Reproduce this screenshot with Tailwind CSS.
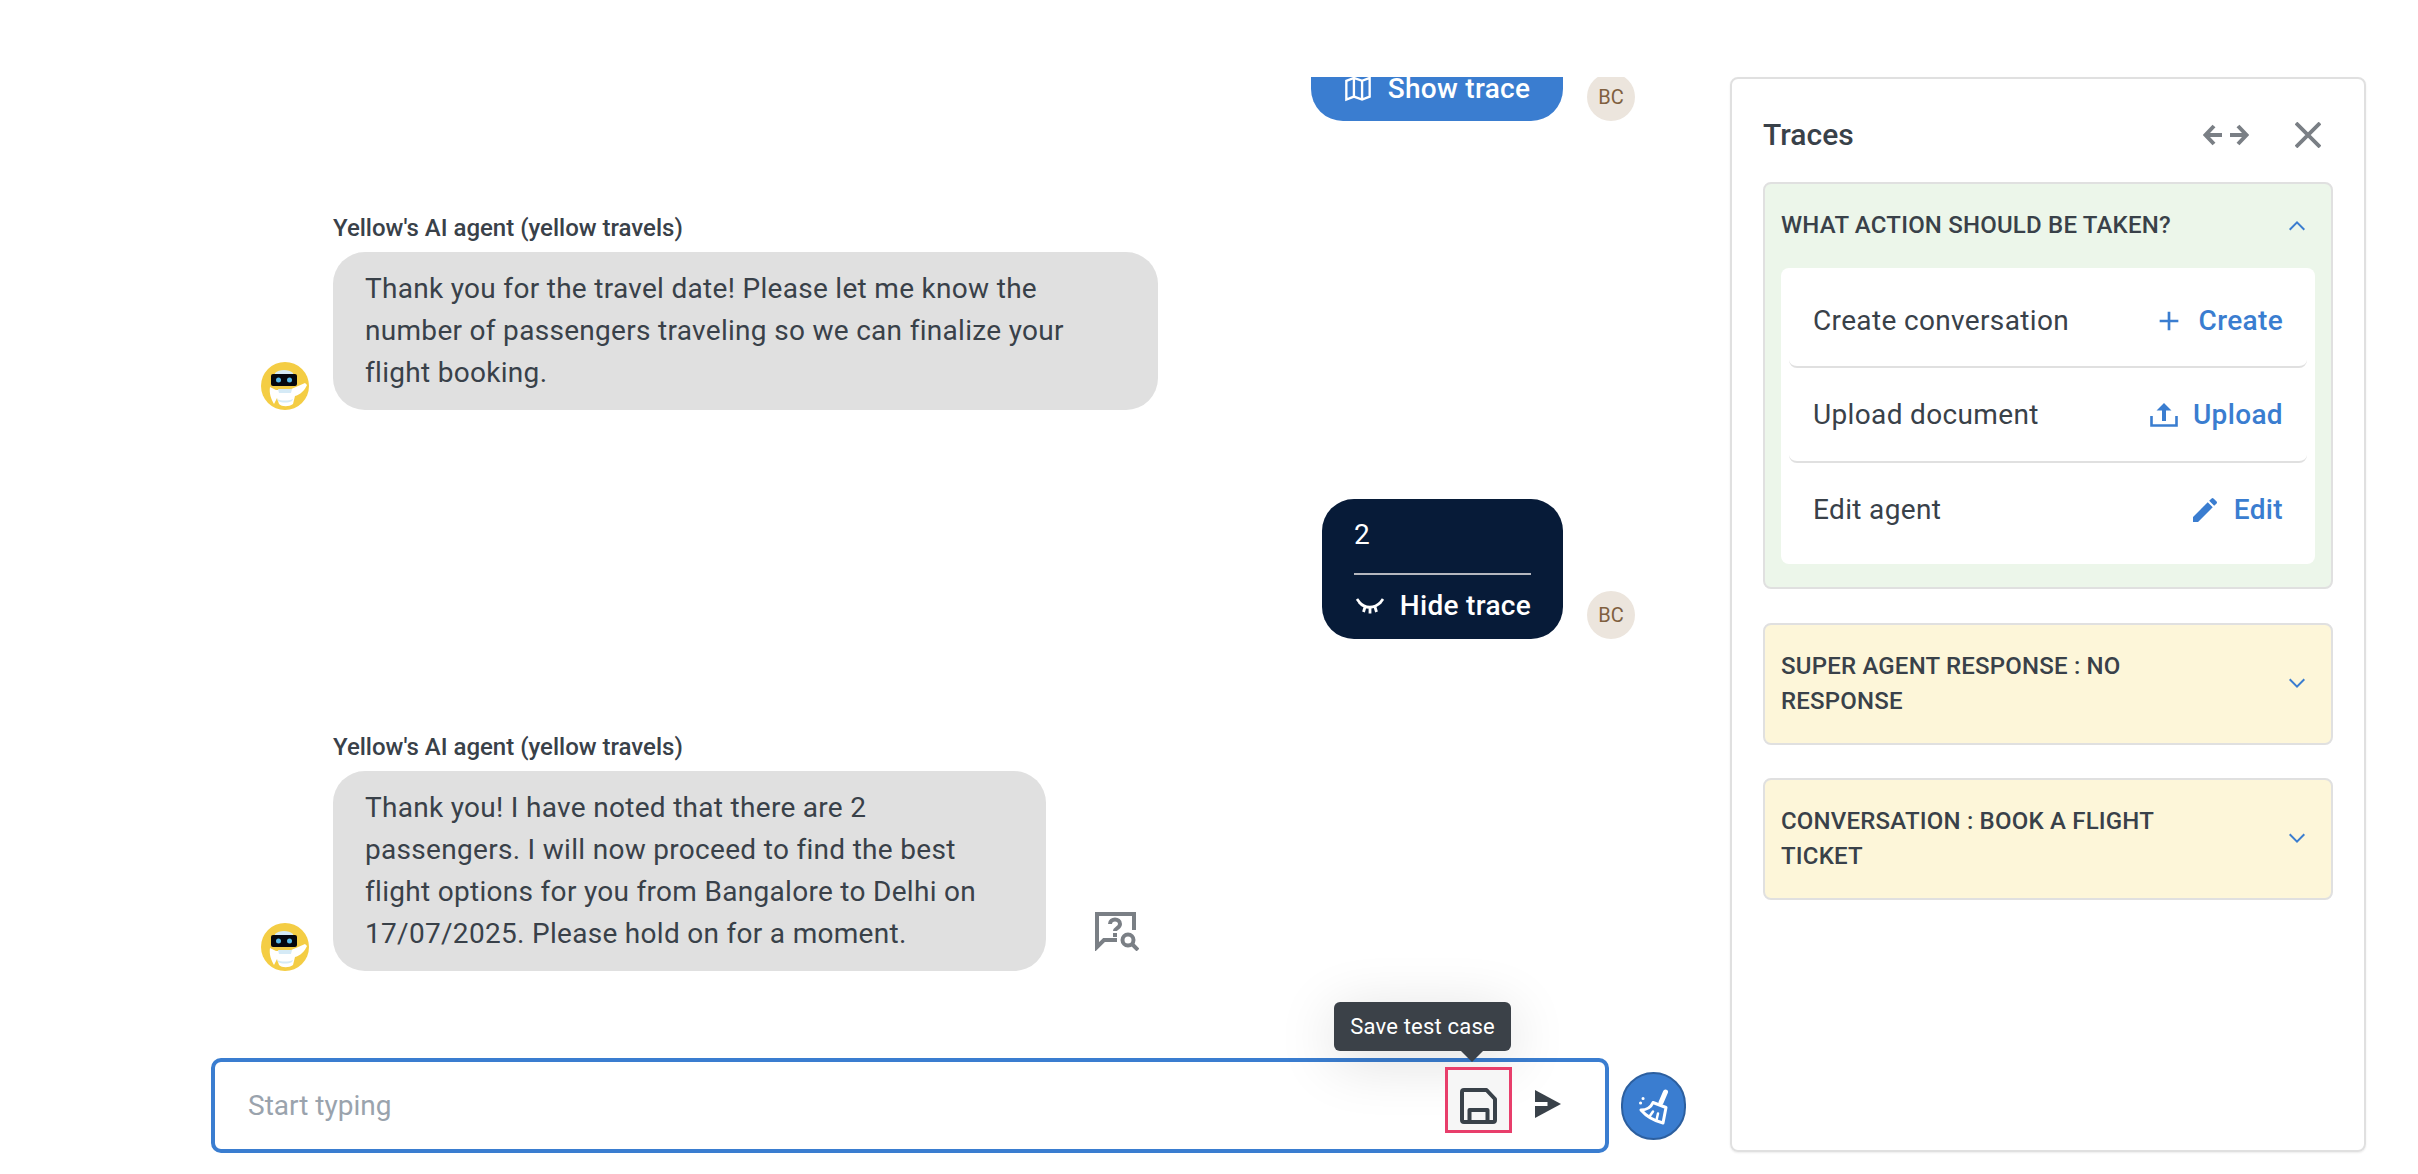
<!doctype html>
<html>
<head>
<meta charset="utf-8">
<script src="https://cdn.jsdelivr.net/npm/@tailwindcss/browser@4"></script>
</head>
<body class="bg-white">
<div class="flex h-[1174px] w-[2418px] overflow-hidden bg-white pt-[77px] pb-[21px] font-['Roboto',sans-serif] text-[#394149]">
  <main class="flex w-[1730px] flex-col">
    <section class="flex h-[981px] flex-col justify-end overflow-hidden pb-[87px] pl-[261px] pr-[95px]">
      <div class="flex shrink-0 items-end justify-end gap-6">
        <div class="flex h-[84px] w-[252px] items-end justify-center gap-4 rounded-[32px] bg-[#3a7dd0] pb-[11px] text-[28px] font-medium leading-[42px] tracking-[0.3px] text-white">
          <svg class="mb-[7px] h-[28px] w-[28px]" viewBox="0 0 24 24" fill="none" stroke="currentColor" stroke-width="2"><path d="M2 5l6.500-2.500 7 2.500L22 2.500v16L15.500 21l-7-2.500L2 21zM8.500 2.500v16M15.500 5v16"/></svg>
          <span>Show trace</span>
        </div>
        <div class="flex h-12 w-12 items-center justify-center rounded-full bg-[#ece5dd] text-[20px] text-[#80603f]">BC</div>
      </div>

      <div class="mt-[91px] flex shrink-0 items-end gap-6">
        <svg class="h-12 w-12 shrink-0" viewBox="0 0 48 48"><circle cx="24" cy="24" r="24" fill="#f4cd44"/><path d="M9 25l6 3h13l16-7 2 2c-2 5-7 10-12 11l-2 8c-4 3-11 3-14 0l-2-6-3 6c-3-5-5-11-4-17z" fill="#fff"/><path d="M17 27h14l-1 4H18zM16 37c5 2 11 2 16 0l-1 2c-4 2-10 2-14 0z" fill="#d5eaf6"/><path d="M14 11c4-4 14-4 18 0v2H14z" fill="#d5eaf6"/><rect x="10" y="12" width="26" height="12" rx="2" fill="#05070d"/><circle cx="17.500" cy="18" r="2.500" fill="#58b9e8"/><circle cx="28.500" cy="18" r="2.500" fill="#58b9e8"/></svg>
        <div>
          <div class="mb-[8px] text-[24px] font-medium leading-[32px]">Yellow's AI agent (yellow travels)</div>
          <div class="w-[825px] rounded-[32px] bg-[#e0e0e0] px-8 py-4 text-[28px] leading-[42px] tracking-[0.3px]">Thank you for the travel date! Please let me know the number of passengers traveling so we can finalize your flight booking.</div>
        </div>
      </div>

      <div class="mt-[89px] flex shrink-0 items-end justify-end gap-6">
        <div class="h-[140px] w-[241px] rounded-[32px] bg-[#071b38] px-8 pt-4 text-white">
          <div class="h-[42px] text-[28px] leading-[40px]">2</div>
          <div class="mt-[16px] h-[2px] bg-[#b4b7be]"></div>
          <div class="mt-[11px] flex items-center justify-between text-[28px] font-medium leading-[40px] tracking-[0.3px]">
            <svg class="h-[22px] w-[32px]" viewBox="0 0 32 22" fill="none" stroke="currentColor" stroke-width="2.800"><path d="M5 7c6 7 15 7 22 0M3 4l3 4M29 4l-3 4M11 12l-1.500 5M16 13.500v5M21 12l1.500 5"/></svg>
            <span>Hide trace</span>
          </div>
        </div>
        <div class="flex h-12 w-12 items-center justify-center rounded-full bg-[#ece5dd] text-[20px] text-[#80603f]">BC</div>
      </div>

      <div class="mt-[92px] flex shrink-0 items-end gap-6">
        <svg class="h-12 w-12 shrink-0" viewBox="0 0 48 48"><circle cx="24" cy="24" r="24" fill="#f4cd44"/><path d="M9 25l6 3h13l16-7 2 2c-2 5-7 10-12 11l-2 8c-4 3-11 3-14 0l-2-6-3 6c-3-5-5-11-4-17z" fill="#fff"/><path d="M17 27h14l-1 4H18zM16 37c5 2 11 2 16 0l-1 2c-4 2-10 2-14 0z" fill="#d5eaf6"/><path d="M14 11c4-4 14-4 18 0v2H14z" fill="#d5eaf6"/><rect x="10" y="12" width="26" height="12" rx="2" fill="#05070d"/><circle cx="17.500" cy="18" r="2.500" fill="#58b9e8"/><circle cx="28.500" cy="18" r="2.500" fill="#58b9e8"/></svg>
        <div>
          <div class="mb-[8px] text-[24px] font-medium leading-[32px]">Yellow's AI agent (yellow travels)</div>
          <div class="w-[713px] rounded-[32px] bg-[#e0e0e0] px-8 py-4 text-[28px] leading-[42px] tracking-[0.3px]">Thank you! I have noted that there are 2 passengers. I will now proceed to find the best flight options for you from Bangalore to Delhi on 17/07/2025. Please hold on for a moment.</div>
        </div>
        <svg class="mb-[20px] ml-[25px] h-[39px] w-[44px]" viewBox="0 0 44 39" fill="none" stroke="#7a7f85" stroke-width="4"><path d="M39 18V2H2v33l7-7h13"/><path d="M15 12c0-6 10-6 10 0 0 4-5 4-5 7"/><path d="M20 21v4"/><circle cx="33" cy="28" r="5.500"/><path d="M37 32l6 6"/></svg>
      </div>
    </section>

    <div class="flex items-center pl-[211px]">
      <div class="relative flex h-[95px] w-[1398px] items-center rounded-[10px] border-4 border-[#3a7dd0] bg-white pl-[33px]">
        <input class="h-full flex-1 bg-transparent text-[28px] outline-none placeholder:text-[#9aa3ad]" placeholder="Start typing">
        <div class="absolute bottom-[98px] left-[1119px] h-[49px] w-[177px] rounded-[6px] bg-[#3b4148] text-center text-[22px] leading-[49px] tracking-[0.2px] whitespace-nowrap text-white shadow-[0_10px_60px_rgba(0,0,0,0.14)]">Save test case
          <div class="absolute top-full left-[127px] h-[11px] w-[22px] bg-[#3b4148] [clip-path:polygon(0_0,100%_0,50%_100%)]"></div>
        </div>
        <div class="absolute top-[5px] left-[1230px] flex h-[66px] w-[67px] items-start justify-center border-[3px] border-[#e83e6b] bg-[#f6f6f6] pt-[18px]">
          <svg class="h-[36px] w-[37px]" viewBox="0 0 37 36" fill="none" stroke="#394149" stroke-width="4" stroke-linejoin="round"><path d="M2 4a2 2 0 012-2h22.500L35 11v21a2 2 0 01-2 2H4a2 2 0 01-2-2z"/><path d="M9.500 34V22h18v12"/></svg>
        </div>
        <svg class="absolute top-[28px] left-[1320px] h-[28px] w-[26px]" viewBox="0 0 26 28"><path d="M0 0l26 14L0 28z" fill="#394149"/><path d="M0 14h12.500" stroke="#fff" stroke-width="4"/></svg>
      </div>
      <div class="ml-[12px] flex h-[68px] w-[65px] items-center justify-center rounded-full border-2 border-[#2c5f9f] bg-[#3a7dd0]">
        <svg class="h-[42px] w-[42px]" viewBox="0 0 42 42" fill="none" stroke="#fff" stroke-linejoin="round"><path d="M32.500 7L28 17.500" stroke-width="5" stroke-linecap="round"/><path d="M20 17.500l13 5-3 15.500c-8-2-16-6-22-13 6 0 10-3 12-7.500z" stroke-width="3"/><path d="M20 26.500l-3.500 5M25 28.500l-1.500 6.500" stroke-width="2.500" stroke-linecap="round"/><path d="M7.500 18h.1M10 13.500h.1" stroke-width="3" stroke-linecap="round"/></svg>
      </div>
    </div>
  </main>

  <aside class="h-[1075px] w-[636px] rounded-[8px] border-2 border-[#e0e0e0] px-[31px] shadow-[0_1px_2px_rgba(0,0,0,0.08)]">
    <header class="flex h-[103px] items-center justify-between pt-[8px]">
      <h2 class="text-[30px] font-medium">Traces</h2>
      <div class="flex items-center gap-[46px] pr-[12px]">
        <svg class="h-[22px] w-[46px]" viewBox="0 0 46 22" fill="none" stroke="#7a7f85" stroke-width="4"><path d="M19 11H4M11 2l-8.500 9 8.500 9M27 11h15M35 2l8.500 9-8.500 9"/></svg>
        <svg class="h-[26px] w-[26px]" viewBox="0 0 26 26" fill="none" stroke="#7a7f85" stroke-width="3.800"><path d="M1 1l24 24M25 1L1 25"/></svg>
      </div>
    </header>

    <div class="h-[407px] rounded-[8px] border-2 border-[#e0e0e0] bg-[#ecf6ea] px-4">
      <div class="flex h-[84px] items-center justify-between pr-[6px] pb-[2px]">
        <div class="text-[24px] font-medium tracking-[0.2px] uppercase">What action should be taken?</div>
        <svg class="h-[24px] w-[24px]" viewBox="0 0 24 24" fill="#3a7dd0"><path d="M12 8l-8 8 1.400 1.400L12 10.800l6.600 6.600L20 16z"/></svg>
      </div>
      <div class="h-[296px] rounded-[8px] bg-white px-2">
        <div class="flex h-[100px] items-center justify-between rounded-b-[8px] border-b-2 border-[#e0e0e0] px-6 pt-[7px] text-[28px] tracking-[0.35px]">
          <span>Create conversation</span>
          <span class="flex items-center gap-[14px] font-medium text-[#3a7dd0]"><svg class="h-8 w-8" viewBox="0 0 24 24" fill="currentColor"><path d="M19 13h-6v6h-2v-6H5v-2h6V5h2v6h6v2z"/></svg>Create</span>
        </div>
        <div class="flex h-[95px] items-center justify-between rounded-b-[8px] border-b-2 border-[#e0e0e0] px-6 text-[28px] tracking-[0.35px]">
          <span>Upload document</span>
          <span class="flex items-center gap-[15px] font-medium text-[#3a7dd0]"><svg class="h-[24px] w-[28px]" viewBox="0 0 28 24" fill="none" stroke="currentColor"><path d="M1.500 13v9.500h25V13" stroke-width="2.600"/><path d="M14 0l-7.500 7.500H12V18h4V7.500h5.500z" fill="currentColor" stroke="none"/></svg>Upload</span>
        </div>
        <div class="flex h-[95px] items-center justify-between px-6 pb-[2px] text-[28px] tracking-[0.35px]">
          <span>Edit agent</span>
          <span class="flex items-center gap-[13px] font-medium text-[#3a7dd0]"><svg class="h-8 w-8" viewBox="0 0 24 24" fill="currentColor"><path d="M3 17.250V21h3.750L17.810 9.940l-3.750-3.750L3 17.250zM20.710 7.040c.39-.39.39-1.020 0-1.410l-2.340-2.340a.996.996 0 00-1.410 0l-1.830 1.830 3.750 3.750 1.830-1.830z"/></svg>Edit</span>
        </div>
      </div>
    </div>

    <div class="mt-[34px] flex h-[122px] items-center justify-between rounded-[8px] border-2 border-[#e0e0e0] bg-[#fdf6d9] pr-[22px] pl-4">
      <div class="w-[400px] text-[24px] leading-[35px] font-medium tracking-[0.2px] uppercase">Super agent response : No response</div>
      <svg class="h-[24px] w-[24px]" viewBox="0 0 24 24" fill="#3a7dd0"><path d="M12 16l8-8-1.400-1.400L12 13.200 5.400 6.600 4 8z"/></svg>
    </div>
    <div class="mt-[33px] flex h-[122px] items-center justify-between rounded-[8px] border-2 border-[#e0e0e0] bg-[#fdf6d9] pr-[22px] pl-4">
      <div class="w-[400px] text-[24px] leading-[35px] font-medium tracking-[0.2px] uppercase">Conversation : Book a flight ticket</div>
      <svg class="h-[24px] w-[24px]" viewBox="0 0 24 24" fill="#3a7dd0"><path d="M12 16l8-8-1.400-1.400L12 13.200 5.400 6.600 4 8z"/></svg>
    </div>
  </aside>
</div>
</body>
</html>
